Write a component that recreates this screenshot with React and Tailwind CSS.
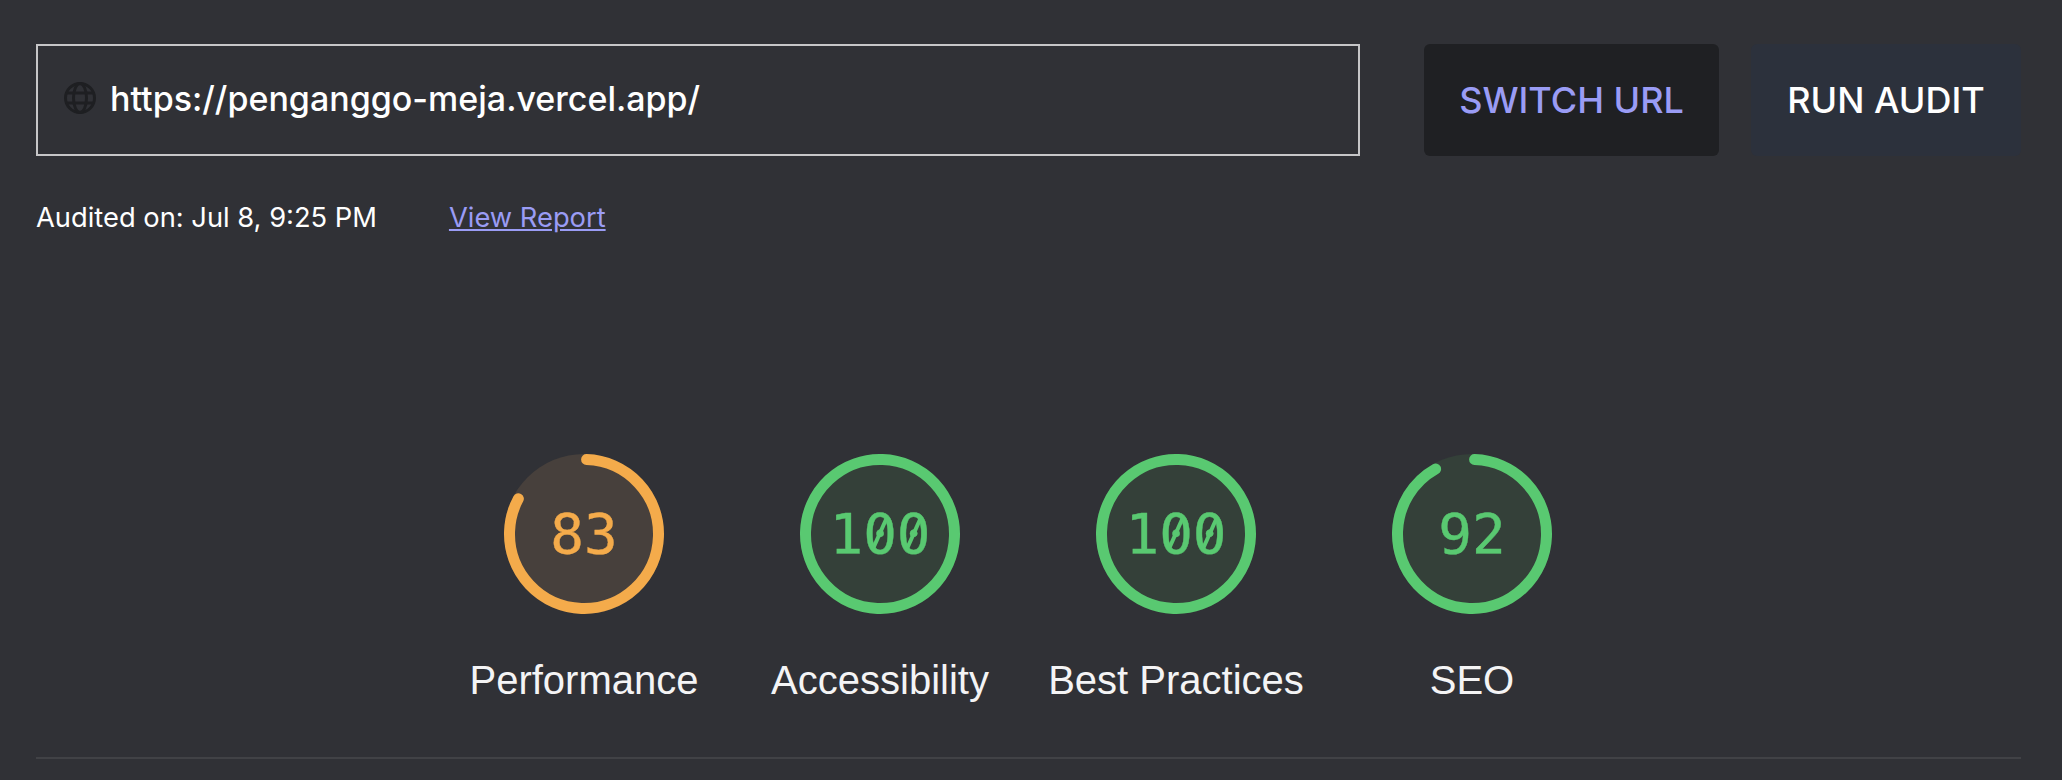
const scores = [
  { label: 'Performance', value: 83, stroke: '#f4ab4b', fill: '#47403c', text: '#f4ab4b' },
  { label: 'Accessibility', value: 100, stroke: '#59c971', fill: '#344039', text: '#59c971' },
  { label: 'Best Practices', value: 100, stroke: '#59c971', fill: '#344039', text: '#59c971' },
  { label: 'SEO', value: 92, stroke: '#59c971', fill: '#344039', text: '#59c971' },
];

const GlobeIcon = () => (
  <svg width="32" height="32" viewBox="0 0 32 32" fill="none" stroke="#1e1f22" strokeWidth="3" className="shrink-0">
    <circle cx="16" cy="16" r="14.5" />
    <ellipse cx="16" cy="16" rx="6.5" ry="14.5" />
    <path d="M3 11h26M3 21h26" />
  </svg>
);

// the font's zero only has a dot, the reference's has a slash through it
const Digit = ({ char }) => (
  <span className="relative inline-block">
    {char}
    {char === '0' && (
      <span className="absolute left-1/2 top-1/2 ml-[-2px] mt-[-19px] w-[4px] h-[36px] rotate-[24deg] bg-current" />
    )}
  </span>
);

const Gauge = ({ value, stroke, fill, text }) => {
  const radius = 74.5;
  const circumference = 2 * Math.PI * radius;
  // full rings have no gap, the rest start a hair past twelve o'clock
  const dash = value === 100 ? circumference : ((value * 3.6 - 3) / 360) * circumference;
  return (
    <div className="relative w-[160px] h-[160px]">
      <svg width="160" height="160" viewBox="0 0 160 160">
        <circle cx="80" cy="80" r="80" fill={fill} />
        <circle
          cx="80"
          cy="80"
          r={radius}
          fill="none"
          stroke={stroke}
          strokeWidth="11"
          strokeLinecap="round"
          strokeDasharray={`${dash} ${circumference}`}
          transform="rotate(-88 80 80)"
        />
      </svg>
      <div
        className="absolute inset-0 flex items-center justify-center text-[56px] [-webkit-text-stroke:0.4px_currentColor] font-['DejaVu_Sans_Mono',monospace]"
        style={{ color: text }}
      >
        {String(value).split('').map((char, i) => (
          <Digit key={i} char={char} />
        ))}
      </div>
    </div>
  );
};

export default function App() {
  return (
    <div className="w-[2062px] h-[780px] overflow-hidden bg-[#303136] pt-11 pl-9 pr-[41px] font-['Inter',sans-serif]">
      <div className="flex items-stretch h-[112px]">
        <div className="flex items-center gap-[14px] w-[1324px] border-2 border-[#c6c6c8] pl-[26px] pb-[4px]">
          <GlobeIcon />
          <span className="text-[34px] font-medium text-white">https://penganggo-meja.vercel.app/</span>
        </div>
        <button className="ml-[64px] w-[295px] rounded-md bg-[#1f2023] text-[36px] font-medium text-[#9a9cf5]">SWITCH URL</button>
        <button className="ml-[32px] w-[270px] rounded-md bg-[#2c313c] text-[36px] font-medium text-white">RUN AUDIT</button>
      </div>

      <div className="flex items-center mt-[46px] text-[27.3px] leading-[32px]">
        <span className="text-white">Audited on: Jul 8, 9:25 PM</span>
        <a href="#" className="ml-[72px] text-[#9a9cf5] underline">View Report</a>
      </div>

      <div className="flex justify-start pl-[400px] mt-[220px]">
        {scores.map((score) => (
          <div key={score.label} className="w-[296px] flex flex-col items-center">
            <Gauge value={score.value} stroke={score.stroke} fill={score.fill} text={score.text} />
            <div className="mt-[42px] text-[40px] leading-[48px] whitespace-nowrap text-[#f4f4f5] font-['Liberation_Sans',sans-serif]">
              {score.label}
            </div>
          </div>
        ))}
      </div>

      <div className="mt-[53px] h-[2px] bg-[#414246]" />
    </div>
  );
}
